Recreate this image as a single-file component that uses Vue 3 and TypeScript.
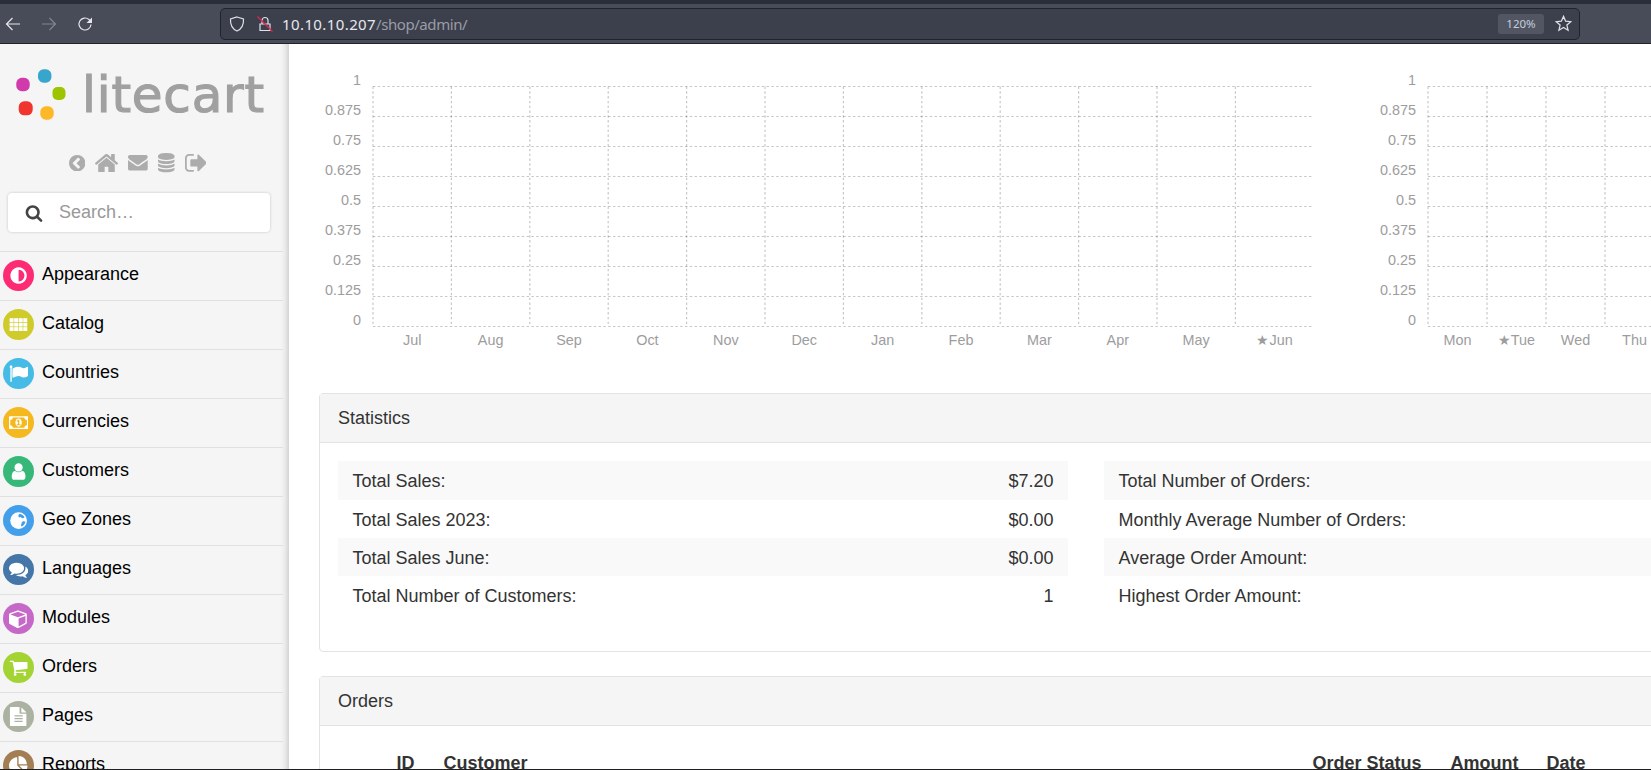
<template>
  <div class="screen">
    <header class="browser">
      <div class="nav-btns">
        <svg class="nav-icon" viewBox="0 0 16 16"><path d="M15 8H1.500M7.500 2 1.500 8l6 6" /></svg>
        <svg class="nav-icon dim" viewBox="0 0 16 16"><path d="M1 8h13.500M8.500 2l6 6-6 6" /></svg>
        <svg class="nav-icon" viewBox="0 0 16 16"><path d="M14 8.500a6 6 0 1 1-2-5L14 6" /><path class="solid" d="M15 1.500v5.500H9.500z" /></svg>
      </div>
      <div class="urlbar">
        <svg class="url-icon" viewBox="0 0 16 16"><path d="M8 1 14.500 3c.3 5.800-1.800 10-6.500 12C3.300 13 1.200 8.800 1.500 3z" /></svg>
        <svg class="url-icon lock" viewBox="0 0 16 16">
          <path d="M3 8h10v6.500H3zM5 8V4.500a3 3 0 0 1 6 0V8" />
          <path class="strike" d="M.5 .5 15.500 15.500" />
        </svg>
        <span class="url-text"><span class="host">10.10.10.207</span>/shop/admin/</span>
        <span class="zoom-badge">120%</span>
        <svg class="url-icon star" viewBox="0 0 16 16"><path d="m8 1.300 2 4.500 4.900.5-3.700 3.200 1.100 4.800L8 11.800l-4.300 2.500 1.100-4.800L1.100 6.300 6 5.800z" /></svg>
      </div>
    </header>

    <div class="page">
      <aside class="sidebar">
        <div class="logo">
          <svg class="logo-dots" viewBox="0 0 50 56">
            <rect x="0.300" y="8.800" width="13.400" height="13.400" rx="5.500" fill="#d03aab" />
            <rect x="22" y="0.300" width="13.400" height="13.400" rx="5.500" fill="#36a6cc" />
            <rect x="36.500" y="18" width="13" height="13" rx="5" fill="#9dc400" />
            <rect x="2.700" y="32.300" width="14" height="14" rx="5.500" fill="#f0352e" />
            <rect x="24.300" y="37.300" width="13.400" height="13.400" rx="5.500" fill="#fdb827" />
          </svg>
          <span class="logo-text">litecart</span>
        </div>
        <div class="quick-links">
          <svg v-for="icon in quickIcons" :key="icon.d" :viewBox="icon.box" :width="icon.w"><path :d="icon.d" /></svg>
        </div>
        <div class="search">
          <svg viewBox="0 0 1792 1792"><path :d="searchIcon" /></svg>
          <span>Search…</span>
        </div>
        <ul class="menu">
          <li v-for="item in menu" :key="item.name">
            <span class="badge" :style="{ background: item.color }">
              <svg v-if="item.grid" class="glyph" viewBox="0 0 24 24">
                <template v-for="y in [4, 9.600, 15.200]" :key="y">
                  <rect v-for="x in [0.750, 6.450, 12.150, 17.850]" :key="x" :x="x" :y="y" width="5" height="4.800" />
                </template>
              </svg>
              <svg v-else-if="item.globe" class="glyph" viewBox="0 0 24 24">
                <circle cx="12" cy="12" r="10.500" />
                <path :fill="item.color" d="M13 3.500c3 .5 5.500 2 6.500 4.500-1.500 1-3 1.500-4 .5l-1-1-2 .5-1-2zM17 13c1.500-.5 3 0 3.500 1-1 2.500-2.500 4.500-5 5.500-1-2 0-5 1.500-6.500z" />
              </svg>
              <svg v-else class="glyph" :viewBox="item.box || '0 0 1792 1792'"><path :d="item.icon" /></svg>
            </span>
            <span class="menu-label">{{ item.name }}</span>
          </li>
        </ul>
      </aside>

      <main class="content">
        <div class="charts">
          <svg v-for="chart in charts" :key="chart.width" class="chart" :width="chart.width" height="300">
            <line v-for="(t, i) in ticks" :key="t" :x1="chart.left" :x2="chart.width" :y1="rowY(i)" :y2="rowY(i)" />
            <line
              v-for="(l, i) in chart.labels"
              :key="l"
              :x1="chart.left + i * chart.step"
              :x2="chart.left + i * chart.step"
              :y1="rowY(0)"
              :y2="rowY(8)"
            />
            <text v-for="(t, i) in ticks" :key="t" class="tick" :x="chart.left - 12" :y="rowY(i) - 2">{{ t }}</text>
            <text
              v-for="(l, i) in chart.labels"
              :key="l"
              class="month"
              :x="chart.left + (i + 0.5) * chart.step"
              :y="285"
            >{{ l }}</text>
          </svg>
        </div>

        <section class="panel">
          <h2>Statistics</h2>
          <div class="stats">
            <dl v-for="(col, c) in stats" :key="c">
              <div v-for="row in col" :key="row[0]" class="stat-row">
                <dt>{{ row[0] }}</dt>
                <dd>{{ row[1] }}</dd>
              </div>
            </dl>
          </div>
        </section>

        <section class="panel">
          <h2>Orders</h2>
          <div class="orders">
            <table>
              <colgroup>
                <col class="c-check" /><col class="c-id" /><col class="c-customer" />
                <col class="c-status" /><col class="c-amount" /><col />
              </colgroup>
              <thead>
                <tr>
                  <th></th>
                  <th>ID</th>
                  <th>Customer</th>
                  <th>Order Status</th>
                  <th>Amount</th>
                  <th>Date</th>
                </tr>
              </thead>
            </table>
          </div>
        </section>
      </main>
    </div>
  </div>
</template>

<script setup lang="ts">
interface MenuItem {
  name: string
  color: string
  icon?: string
  box?: string
  grid?: boolean
  globe?: boolean
}

const searchIcon = 'M1216 832q0-185-131.5-316.5t-316.5-131.5-316.5 131.5-131.5 316.5 131.5 316.5 316.5 131.5 316.5-131.5 131.5-316.5zm512 832q0 52-38 90t-90 38q-54 0-90-38l-343-342q-179 124-399 124-143 0-273.5-55.5t-225-150-150-225-55.5-273.5 55.5-273.5 150-225 225-150 273.5-55.5 273.5 55.5 225 150 150 225 55.5 273.5q0 220-124 399l343 343q37 37 37 90z'

const quickIcons = [
  { w: 16.4, box: '128 128 1536 1536', d: 'M1037 1395l102-102q19-19 19-45t-19-45l-307-307 307-307q19-19 19-45t-19-45l-102-102q-19-19-45-19t-45 19l-454 454q-19 19-19 45t19 45l454 454q19 19 45 19t45-19zm627-499q0 209-103 385.5t-279.5 279.5-385.5 103-385.5-103-279.5-279.5-103-385.5 103-385.5 279.5-279.5 385.5-103 385.5 103 279.5 279.5 103 385.5z' },
  { w: 23, box: '96 256 1600 1280', d: 'M1472 992v480q0 26-19 45t-45 19h-384v-384h-256v384h-384q-26 0-45-19t-19-45v-480q0-1 .5-3t.5-3l575-474 575 474q1 2 1 6zm223-69l-62 74q-8 9-21 11h-3q-13 0-21-7l-692-577-692 577q-12 8-24 7-13-2-21-11l-62-74q-8-10-7-23.5t11-21.5l719-599q32-26 76-26t76 26l244 204v-195q0-14 9-23t23-9h192q14 0 23 9t9 23v408l219 182q10 8 11 21.5t-7 23.5z' },
  { w: 19.7, box: '0 256 1792 1408', d: 'M1792 710v794q0 66-47 113t-113 47h-1472q-66 0-113-47t-47-113v-794q44 49 101 87 362 246 497 345 57 42 92.5 65.5t94.5 48 110 24.5h2q51 0 110-24.5t94.5-48 92.5-65.5q170-123 498-345 57-39 100-87zm0-294q0 79-49 151t-122 123q-376 261-468 325-10 7-42.5 30.5t-54 38-52 32.5-57.5 27-50 9h-2q-23 0-50-9t-57.5-27-52-32.5-54-38-42.5-30.5q-91-64-262-182.5t-205-142.5q-62-42-117-115.5t-55-136.5q0-78 41.5-130t118.5-52h1472q65 0 112.5 47t47.5 113z' },
  { w: 16.5, box: '128 0 1536 1792', d: 'M896 768q237 0 443-43t325-127v170q0 69-103 128t-280 93.5-385 34.5-385-34.5-280-93.5-103-128v-170q119 84 325 127t443 43zm0 768q237 0 443-43t325-127v170q0 69-103 128t-280 93.5-385 34.5-385-34.5-280-93.5-103-128v-170q119 84 325 127t443 43zm0-384q237 0 443-43t325-127v170q0 69-103 128t-280 93.5-385 34.5-385-34.5-280-93.5-103-128v-170q119 84 325 127t443 43zm0-1152q208 0 385 34.5t280 93.5 103 128v128q0 69-103 128t-280 93.5-385 34.5-385-34.5-280-93.5-103-128v-128q0-69 103-128t280-93.5 385-34.5z' },
  { w: 21.7, box: '64 256 1568 1280', d: 'M704 1440q0 4 1 20t.5 26.5-3 23.5-10 19.5-20.5 6.5h-320q-119 0-203.5-84.5t-84.5-203.5v-704q0-119 84.5-203.5t203.5-84.5h320q13 0 22.5 9.5t9.5 22.5q0 4 1 20t.5 26.5-3 23.5-10 19.5-20.5 6.5h-320q-66 0-113 47t-47 113v704q0 66 47 113t113 47h312l11.5 1 11.5 3 8 5.5 7 9 2 13.5zm928-544q0 26-19 45l-544 544q-19 19-45 19t-45-19-19-45v-288h-448q-26 0-45-19t-19-45v-384q0-26 19-45t45-19h448v-288q0-26 19-45t45-19 45 19l544 544q19 19 19 45z' },
]

const menu: MenuItem[] = [
  { name: 'Appearance', color: '#fd2a74', icon: 'M896 352v1088q148 0 273-73t198-198 73-273-73-273-198-198-273-73zm768 544q0 209-103 385.5t-279.5 279.5-385.5 103-385.5-103-279.5-279.5-103-385.5 103-385.5 279.5-279.5 385.5-103 385.5 103 279.5 279.5 103 385.5z' },
  { name: 'Catalog', color: '#cfcb2b', grid: true },
  { name: 'Countries', color: '#45bbe6', icon: 'M320 256q0 72-64 110v1266q0 13-9.5 22.5t-22.5 9.5h-64q-13 0-22.5-9.5t-9.5-22.5v-1266q-64-38-64-110 0-53 37.5-90.5t90.5-37.5 90.5 37.5 37.5 90.5zm1472 64v763q0 25-12.5 38.5t-39.5 27.5q-215 116-369 116-61 0-123.5-22t-108.5-48-115.5-48-142.5-22q-192 0-464 146-17 9-33 9-26 0-45-19t-19-45v-742q0-32 31-55 21-14 79-43 236-120 421-120 107 0 200 29t219 88q38 19 88 19 54 0 117.5-21t110-47 88-47 54.5-21q26 0 45 19t19 45z' },
  { name: 'Currencies', color: '#f5b81f', box: '0 0 1920 1792', icon: 'M768 1152h384v-96h-128v-448h-114l-148 137 77 80q42-37 55-57h2v288h-128v96zm512-256q0 70-21 142t-59.5 134-101.5 101-138 39-138-39-101.5-101-59.5-134-21-142 21-142 59.5-134 101.5-101 138-39 138 39 101.5 101 59.5 134 21 142zm512 256v-512q-106 0-181-75t-75-181h-1152q0 106-75 181t-181 75v512q106 0 181 75t75 181h1152q0-106 75-181t181-75zm128-832v1152q0 26-19 45t-45 19h-1792q-26 0-45-19t-19-45v-1152q0-26 19-45t45-19h1792q26 0 45 19t19 45z' },
  { name: 'Customers', color: '#37b878', icon: 'M1536 1399q0 109-62.5 187t-150.5 78h-854q-88 0-150.5-78t-62.5-187q0-85 8.5-160.5t31.5-152 58.5-131 94-89 134.5-34.5q131 128 313 128t313-128q76 0 134.5 34.5t94 89 58.5 131 31.5 152 8.5 160.5zm-256-887q0 159-112.5 271.5t-271.5 112.5-271.5-112.5-112.5-271.5 112.5-271.5 271.5-112.5 271.5 112.5 112.5 271.5z' },
  { name: 'Geo Zones', color: '#449fea', globe: true },
  { name: 'Languages', color: '#4476a8', icon: 'M1408 768q0 139-94 257t-256.5 186.5-353.5 68.5q-86 0-176-16-124 88-278 128-36 9-86 16h-3q-11 0-20.5-8t-11.5-21q-1-3-1-6.5t.5-6.5 2-6l2.5-5 3.5-5.5 4-5 4.5-5 4-4.5q5-6 23-25t26-29.5 22.5-29 25-38.5 20.5-44q-124-72-195-177t-71-224q0-139 94-257t256.5-186.5 353.5-68.5 353.5 68.5 256.5 186.5 94 257zm384 256q0 120-71 224.5t-195 176.5q10 24 20.5 44t25 38.5 22.5 29 26 29.5 23 25q1 1 4 4.5t4.5 5 4 5 3.5 5.5l2.5 5 2 6 .5 6.5-1 6.5q-3 14-13 22t-22 7q-50-7-86-16-154-40-278-128-90 16-176 16-271 0-472-132 58 4 88 4 161 0 309-45t264-129q125-92 192-212t67-254q0-77-23-152 129 71 204 178t75 230z' },
  { name: 'Modules', color: '#c668c8', icon: 'M896 1629l640-349v-636l-640 233v752zm-64-865l698-254-698-254-698 254zm832-252v768q0 35-18 65t-49 47l-704 384q-28 16-61 16t-61-16l-704-384q-31-17-49-47t-18-65v-768q0-40 23-73t61-47l704-256q22-8 44-8t44 8l704 256q38 14 61 47t23 73z' },
  { name: 'Orders', color: '#a3d433', icon: 'M704 1536q0 52-38 90t-90 38-90-38-38-90 38-90 90-38 90 38 38 90zm896 0q0 52-38 90t-90 38-90-38-38-90 38-90 90-38 90 38 38 90zm128-1088v512q0 24-16.5 42.5t-40.5 21.5l-1044 122q13 60 13 70 0 16-24 64h920q26 0 45 19t19 45-19 45-45 19h-1024q-26 0-45-19t-19-45q0-11 8-31.5t16-36 21.5-40 15.5-29.5l-177-823h-204q-26 0-45-19t-19-45 19-45 45-19h256q16 0 28.5 6.5t19.5 15.5 13 24.5 8 26 5.5 29.5 4.5 26h1201q26 0 45 19t19 45z' },
  { name: 'Pages', color: '#abb2a2', icon: 'M1596 476q14 14 28 36h-472v-472q22 14 36 28zm-476 164h504v1056q0 40-28 68t-68 28h-1344q-40 0-68-28t-28-68v-1600q0-40 28-68t68-28h800v544q0 40 28 68t68 28zm160 736v-64q0-14-9-23t-23-9h-704q-14 0-23 9t-9 23v64q0 14 9 23t23 9h704q14 0 23-9t9-23zm0-256v-64q0-14-9-23t-23-9h-704q-14 0-23 9t-9 23v64q0 14 9 23t23 9h704q14 0 23-9t9-23zm0-256v-64q0-14-9-23t-23-9h-704q-14 0-23 9t-9 23v64q0 14 9 23t23 9h704q14 0 23-9t9-23z' },
  { name: 'Reports', color: '#a37e55', icon: 'M768 890l546 546q-106 108-247.5 168t-298.5 60q-209 0-385.5-103t-279.5-279.5-103-385.5 103-385.5 279.5-279.5 385.5-103v762zm187 6h773q0 157-60 298.5t-168 247.5zm709-128h-768v-768q209 0 385.5 103t279.5 279.5 103 385.5z' },
]

const ticks = ['1', '0.875', '0.75', '0.625', '0.5', '0.375', '0.25', '0.125', '0']
const rowY = (i: number) => 26.5 + i * 30

const charts = [
  {
    width: 993,
    left: 54,
    step: 78.4,
    labels: ['Jul', 'Aug', 'Sep', 'Oct', 'Nov', 'Dec', 'Jan', 'Feb', 'Mar', 'Apr', 'May', '★Jun'],
  },
  {
    width: 470,
    left: 54,
    step: 59,
    labels: ['Mon', '★Tue', 'Wed', 'Thu', 'Fri', 'Sat', 'Sun'],
  },
]

const stats = [
  [
    ['Total Sales:', '$7.20'],
    ['Total Sales 2023:', '$0.00'],
    ['Total Sales June:', '$0.00'],
    ['Total Number of Customers:', '1'],
  ],
  [
    ['Total Number of Orders:', ''],
    ['Monthly Average Number of Orders:', ''],
    ['Average Order Amount:', ''],
    ['Highest Order Amount:', ''],
  ],
]
</script>

<style scoped>
.screen {
  width: 1651px;
  height: 770px;
  overflow: hidden;
  display: flex;
  flex-direction: column;
  border-bottom: 1px solid #1f1f22;
  box-sizing: border-box;
  font-family: "Liberation Sans", Arial, sans-serif;
  background: #fff;
}

/* browser chrome */
.browser {
  height: 44px;
  flex: none;
  box-sizing: border-box;
  display: flex;
  align-items: center;
  background: #484c59;
  border-top: 4px solid #2a2e3a;
  border-bottom: 1px solid #20232c;
}
.nav-btns {
  width: 220px;
  display: flex;
  gap: 20px;
  padding-left: 5px;
  box-sizing: border-box;
}
.nav-icon {
  width: 16px;
  height: 16px;
  fill: none;
  stroke: #e6e6ea;
  stroke-width: 1.2;
}
.nav-icon .solid {
  fill: #e6e6ea;
  stroke: none;
}
.nav-icon.dim {
  stroke: #82858f;
}
.urlbar {
  width: 1360px;
  height: 32px;
  box-sizing: border-box;
  display: flex;
  align-items: center;
  padding: 0 7px 0 8px;
  background: #3c404d;
  border: 1px solid #20232c;
  border-radius: 5px;
  color: #9a9ca5;
  font: 15px "Noto Sans", sans-serif;
}
.url-icon {
  width: 16px;
  height: 16px;
  fill: none;
  stroke: #e0e0e5;
  stroke-width: 1.2;
  flex: none;
}
.url-icon.lock {
  margin-left: 12px;
}
.strike {
  stroke: #e0244d;
}
.url-text {
  margin-left: 9px;
  flex: 1;
  letter-spacing: -0.44px;
}
.host {
  color: #e8e8ec;
  letter-spacing: 0.4px;
}
.zoom-badge {
  width: 46px;
  height: 20px;
  line-height: 20px;
  text-align: center;
  background: #525663;
  border-radius: 3px;
  color: #c3cfdd;
  font-size: 11.5px;
}
.star {
  width: 17px;
  height: 17px;
  margin-left: 11px;
}

.page {
  flex: 1;
  min-height: 0;
  display: flex;
}

/* sidebar */
.sidebar {
  width: 289px;
  flex: none;
  background: #f5f5f5;
  box-shadow: inset -9px 0 9px -9px rgba(0, 0, 0, 0.28);
  padding-right: 6px;
  box-sizing: border-box;
}
.logo {
  display: flex;
  align-items: flex-start;
  height: 81px;
  padding: 25px 0 0 16px;
  box-sizing: border-box;
}
.logo-dots {
  width: 50px;
  height: 56px;
  flex: none;
}
.logo-text {
  margin: 1px 0 0 16px;
  font: 50px/50px "DejaVu Sans", sans-serif;
  letter-spacing: 0.8px;
  color: #a0a0a0;
  -webkit-text-stroke: 1.2px #a0a0a0;
}
.quick-links {
  display: flex;
  align-items: center;
  gap: 10px;
  margin-top: 26px;
  height: 24px;
  padding-left: 69px;
}
.quick-links svg {
  flex: none;
  fill: #acacac;
}
.search {
  height: 39px;
  margin: 17.7px 0 0 8px;
  width: 262px;
  padding-top: 1px;
  box-sizing: border-box;
  display: flex;
  align-items: center;
  background: #fff;
  border-radius: 4px;
  box-shadow: 0 0 3px rgba(0, 0, 0, 0.2);
  color: #999;
  font-size: 18px;
}
.search svg {
  width: 18px;
  height: 18px;
  margin-left: 17px;
  margin-right: 16px;
  fill: #444;
}
.menu {
  list-style: none;
  margin: 19px 0 0;
  padding: 0;
  border-top: 1px solid #e0e0e0;
}
.menu li {
  height: 49px;
  box-sizing: border-box;
  border-bottom: 1px solid #e0e0e0;
  display: flex;
  align-items: center;
  font-size: 18px;
  color: #000;
}
.badge {
  width: 31px;
  height: 31px;
  border-radius: 50%;
  margin-left: 3px;
  flex: none;
  display: flex;
  align-items: center;
  justify-content: center;
}
.glyph {
  width: 19.2px;
  height: 19.2px;
  fill: #fff;
}
.menu-label {
  margin-left: 8px;
  position: relative;
  top: -1px;
}

/* main */
.content {
  flex: none;
  width: 1515px;
  margin-left: 29.5px;
  padding-top: 16px;
}
.charts {
  display: flex;
  gap: 62px;
  margin-bottom: 33.3px;
}
.chart {
  display: block;
  flex: none;
  overflow: hidden;
}
.chart line {
  stroke: rgba(0, 0, 0, 0.22);
  stroke-width: 1.2;
  stroke-dasharray: 2.4 2.4;
}
.chart text {
  font-size: 14.4px;
  fill: #9d9d9d;
}
.tick {
  text-anchor: end;
}
.month {
  text-anchor: middle;
}
.panel {
  border: 1px solid #e3e3e3;
  border-radius: 4px;
  margin-bottom: 24px;
  color: #333;
}
.panel h2 {
  margin: 0;
  height: 49px;
  line-height: 49px;
  padding-left: 18.5px;
  background: #f5f5f5;
  border-bottom: 1px solid #e3e3e3;
  box-sizing: border-box;
  font-size: 18px;
  font-weight: 400;
}
.stats {
  display: grid;
  grid-template-columns: 730px 730px;
  gap: 36px;
  padding: 18px 18px 36.5px;
}
.stats dl {
  margin: 0;
}
.stat-row {
  height: 38.4px;
  box-sizing: border-box;
  display: flex;
  justify-content: space-between;
  align-items: center;
  padding: 2.5px 14px 0 15px;
  font-size: 18px;
}
.stat-row:nth-child(odd) {
  background: #f9f9f9;
}
.stat-row dd {
  margin: 0;
}
.orders {
  padding: 18px;
}
.orders table {
  width: 100%;
  table-layout: fixed;
  border-collapse: collapse;
}
.c-check {
  width: 59px;
}
.c-id {
  width: 47px;
}
.c-customer {
  width: 869px;
}
.c-status {
  width: 138px;
}
.c-amount {
  width: 96px;
}
.orders th {
  text-align: left;
  padding: 6px 0;
  font-size: 18px;
  line-height: 26px;
}
</style>

<style>
html, body {
  margin: 0;
  overflow: hidden;
}
</style>
